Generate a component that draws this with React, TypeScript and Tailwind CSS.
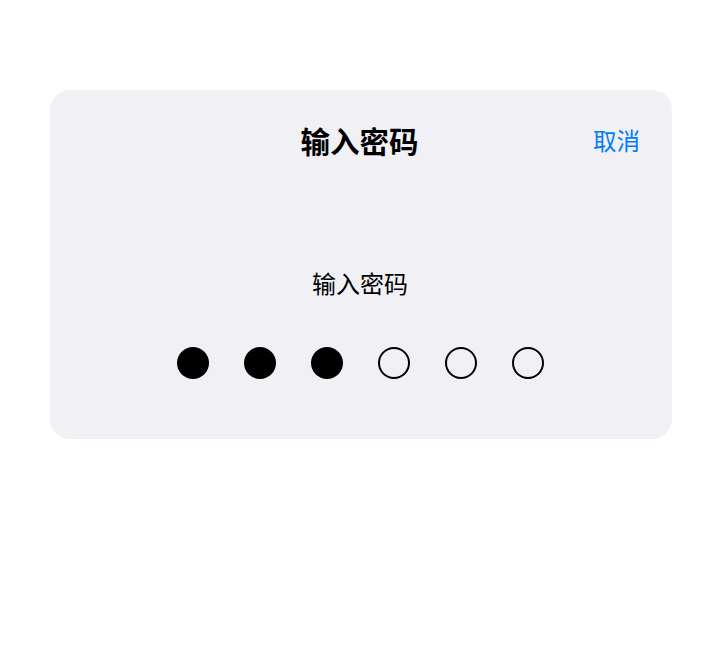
const DIGITS = 6
const FILLED = 3

export default function App() {
  return (
    <div
      className="h-[659px] w-[720px] bg-white pt-[90px]"
      style={{ fontFamily: '"Noto Sans CJK SC", "Noto Sans", sans-serif' }}
    >
      <div className="ml-[50px] flex h-[349px] w-[622px] flex-col items-center rounded-[20px] bg-[#f0f0f5]">
        <div className="grid w-full grid-cols-[1fr_auto_1fr] items-center px-8 pt-[32px]">
          <div />
          <h1 className="mr-[3px] text-[29.5px] font-bold leading-[36px] text-black">输入密码</h1>
          <button className="justify-self-end text-[23.5px] leading-[36px] text-[#007aff]">取消</button>
        </div>

        <p className="mt-[109px] mr-[2px] text-[24px] leading-[32px] text-black">输入密码</p>

        <div className="mt-[48px] mr-[2px] flex gap-[35px]">
          {Array.from({ length: DIGITS }).map((_, i) => (
            <span
              key={i}
              className={
                i < FILLED
                  ? 'h-8 w-8 rounded-full bg-black'
                  : 'h-8 w-8 rounded-full border-2 border-black'
              }
            />
          ))}
        </div>
      </div>
    </div>
  )
}
